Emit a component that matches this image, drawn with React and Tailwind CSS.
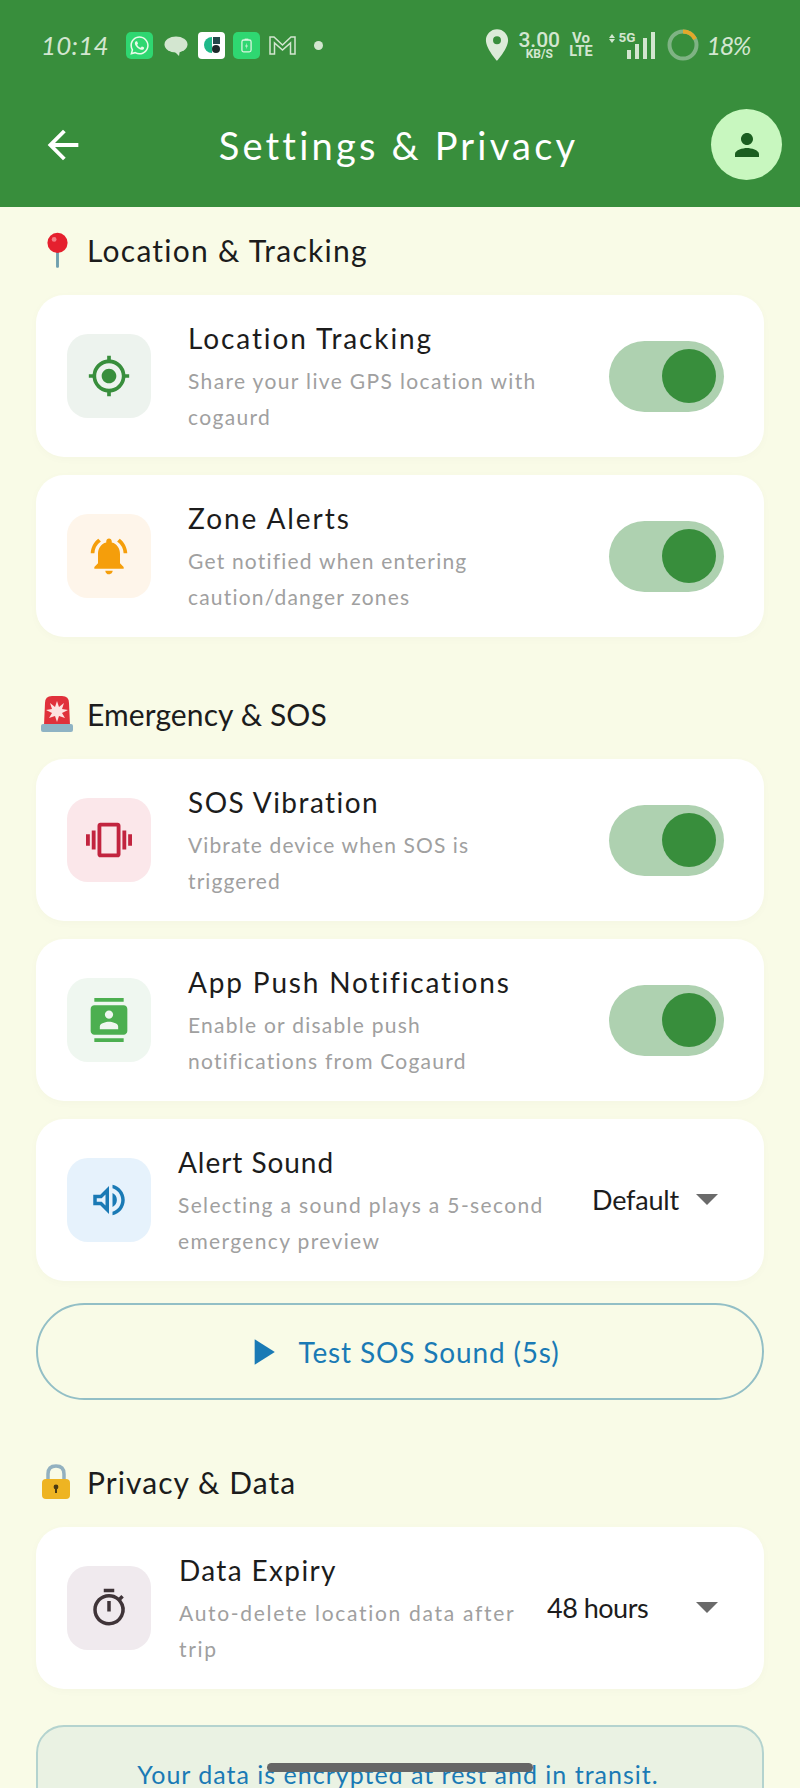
import React from "react";
import { FaWhatsapp } from "react-icons/fa";
import {
  MdArrowBack,
  MdPerson,
  MdGpsFixed,
  MdNotificationsActive,
  MdVibration,
  MdContacts,
  MdOutlineVolumeUp,
  MdOutlineTimer,
  MdPlayArrow,
  MdLocationOn,
} from "react-icons/md";

const FONT = "[font-family:Lato,'Noto_Sans',sans-serif]";

// Small pushpin shown next to the location heading
function PinEmoji() {
  return (
    <svg viewBox="0 0 26 38" className="w-[25px] h-[37px] ml-[4px]">
      <rect x="11.5" y="18" width="3" height="19" rx="1" fill="#6f9fae" />
      <circle cx="13" cy="11" r="10.5" fill="#e5202e" />
      <circle cx="9.5" cy="7.5" r="2.5" fill="#f57e86" />
    </svg>
  );
}

// Rotating beacon shown next to the emergency heading
function SirenEmoji() {
  return (
    <svg viewBox="0 0 34 38" className="w-[34px] h-[38px] -ml-[1px]">
      <path d="M4 30 L5 8 Q5 1 12 1 H22 Q29 1 29 8 L30 30 Z" fill="#e0313b" />
      <path
        d="M17 6 L19 12 L24 8 L22 14 L28 15 L22 18 L25 23 L19 21 L17 27 L15 21 L9 23 L12 18 L6 15 L12 14 L10 8 L15 12 Z"
        fill="#fde3e0"
      />
      <rect x="1" y="29" width="32" height="8" rx="2" fill="#8fb3c4" />
    </svg>
  );
}

// Padlock shown next to the privacy heading
function LockEmoji() {
  return (
    <svg viewBox="0 0 30 36" className="w-[30px] h-[36px]">
      <path d="M7 17 V10 Q7 2 15 2 Q23 2 23 10 V17" fill="none" stroke="#93b1c0" strokeWidth="3.5" />
      <rect x="1" y="15" width="28" height="20" rx="4" fill="#eeb422" />
      <circle cx="15" cy="23" r="2.4" fill="#4b3a12" />
      <rect x="14" y="23" width="2" height="6" fill="#4b3a12" />
    </svg>
  );
}

function StatusBar() {
  return (
    <div className="flex items-center h-[36px] pl-[41px] pr-[50px] text-[#d3e6d0]">
      <span className={`${FONT} italic text-[26px] leading-none tracking-[0.2px] w-[85px]`}>10:14</span>
      <div className="w-[27px] h-[27px] rounded-[5px] bg-[#2fd771] flex items-center justify-center">
        <FaWhatsapp className="text-[21px] text-[#e8fbe8]" />
      </div>
      <svg viewBox="0 0 24 21" className="w-[24px] h-[21px] ml-[11px] mt-[2px]">
        <ellipse cx="12" cy="8.5" rx="11.5" ry="8" fill="#d3e6d0" />
        <path d="M9 14 L15 20 L16 14 Z" fill="#d3e6d0" />
      </svg>
      <div className="w-[27px] h-[27px] rounded-[4px] bg-white ml-[10px] flex items-center justify-center">
        <svg viewBox="0 0 20 20" className="w-[20px] h-[20px]">
          <path d="M10 2 A8 8 0 0 0 10 18 Z" fill="#1fb98a" />
          <rect x="11" y="2" width="7" height="7" fill="#24484a" />
          <circle cx="14" cy="14" r="4" fill="#1d2a2a" />
        </svg>
      </div>
      <div className="w-[27px] h-[27px] rounded-[5px] bg-[#2fd771] ml-[8px] flex items-center justify-center">
        <svg viewBox="0 0 12 16" className="w-[11px] h-[15px]">
          <rect x="1" y="2" width="10" height="13" rx="2" fill="none" stroke="#d9f5df" strokeWidth="1.4" />
          <rect x="4" y="0.5" width="4" height="1.5" fill="#d9f5df" />
          <path d="M6.5 5 L4.5 9 H6 L5.5 12 L7.5 8 H6 Z" fill="#d9f5df" />
        </svg>
      </div>
      <svg viewBox="0 0 27 20" className="w-[27px] h-[20px] ml-[9px]">
        <path
          d="M1 19 V2 H5 L13.5 10 L22 2 H26 V19 H21.5 V8 L13.5 15 L5.5 8 V19 Z"
          fill="none"
          stroke="#d3e6d0"
          strokeWidth="1.5"
        />
      </svg>
      <div className="w-[9px] h-[9px] rounded-full bg-[#d3e6d0] ml-[18px]" />
      <div className="flex-1" />
      <MdLocationOn className="text-[38px] text-[#dcebd9]" />
      <div className="flex flex-col items-center w-[46px] [font-family:Roboto,sans-serif] font-medium">
        <span className="text-[21px] leading-[18px]">3.00</span>
        <span className="text-[12px] leading-[10px] font-bold">KB/S</span>
      </div>
      <div className="flex flex-col items-center ml-[7px] [font-family:Roboto,sans-serif] font-bold">
        <span className="text-[15px] leading-[13px]">Vo</span>
        <span className="text-[14.5px] leading-[14px]">LTE</span>
      </div>
      <div className="relative w-[46px] h-[28px] ml-[16px]">
        <div className="absolute left-0 top-[3px] w-0 h-0 border-x-[3.5px] border-x-transparent border-b-[4px] border-b-[#d3e6d0]" />
        <div className="absolute left-0 top-[8px] w-0 h-0 border-x-[3.5px] border-x-transparent border-t-[4px] border-t-[#d3e6d0]" />
        <span className="absolute left-[10px] top-0 text-[13.5px] leading-[13px] font-bold [font-family:Roboto,sans-serif]">
          5G
        </span>
        <div className="absolute right-0 bottom-0 flex items-end gap-[4px]">
          <div className="w-[4px] h-[9px] bg-[#d3e6d0]" />
          <div className="w-[4px] h-[15px] bg-[#d3e6d0]" />
          <div className="w-[4px] h-[21px] bg-[#d3e6d0]" />
          <div className="w-[4px] h-[27px] bg-[#d3e6d0]" />
        </div>
      </div>
      <svg viewBox="0 0 32 32" className="w-[32px] h-[32px] ml-[12px]">
        <circle cx="16" cy="16" r="13.5" fill="none" stroke="#7fb384" strokeWidth="4" />
        <path d="M16 2.5 A13.5 13.5 0 0 1 28 10" fill="none" stroke="#e3a82b" strokeWidth="4" />
      </svg>
      <span className={`${FONT} italic text-[25px] leading-none ml-[8px] tracking-[-1.4px]`}>18%</span>
    </div>
  );
}

function Header() {
  return (
    <header className="h-[207px] bg-[#388e3c] pt-[27px] shrink-0">
      <StatusBar />
      <div className="flex items-center justify-between mt-[46px] pl-[40px] pr-[18px]">
        <MdArrowBack className="text-[46px] text-white" />
        <h1 className={`${FONT} text-white text-[38px] leading-none tracking-[3.2px] font-normal`}>
          Settings &amp; Privacy
        </h1>
        <div className="w-[71px] h-[71px] rounded-full bg-[#c8f7bf] flex items-center justify-center">
          <MdPerson className="text-[36px] text-[#1b5e20]" />
        </div>
      </div>
    </header>
  );
}

function SectionHeading({ emoji, label, tracking, className }) {
  return (
    <div className={`flex items-center h-[36px] pl-[5px] ${className}`}>
      <div className="w-[46px] flex items-center justify-start">{emoji}</div>
      <h2 className={`${FONT} text-[30px] leading-none text-[#1c1c1c] font-normal ${tracking}`}>{label}</h2>
    </div>
  );
}

function Toggle() {
  return (
    <div className="w-[115px] h-[71px] rounded-full bg-[#aed1b0] flex items-center justify-end pr-[8px] shrink-0">
      <div className="w-[54px] h-[54px] rounded-full bg-[#388e3c]" />
    </div>
  );
}

function Dropdown({ value, valueClass }) {
  return (
    <div className="flex items-center shrink-0 -translate-y-[1px]">
      <span className={`${FONT} text-[27px] leading-none text-[#1c1c1c] ${valueClass}`}>{value}</span>
      <div className="w-0 h-0 border-x-[11px] border-x-transparent border-t-[11px] border-t-[#6a6a6a]" />
    </div>
  );
}

function SettingCard({ icon, iconBg, title, titleTracking, lines, subTracking, right, textGap, className = "" }) {
  return (
    <div
      className={`flex items-center h-[162px] rounded-[28px] bg-white shadow-[0_2px_10px_rgba(0,0,0,0.025)] pl-[31px] pr-[40px] ${className}`}
    >
      <div className={`w-[84px] h-[84px] rounded-[21px] flex items-center justify-center shrink-0 ${iconBg}`}>
        {icon}
      </div>
      <div className={`flex-1 min-w-0 pt-[2px] ${textGap}`}>
        <div className={`${FONT} text-[28px] leading-[38px] mb-[6px] text-[#1c1c1c] ${titleTracking}`}>{title}</div>
        <div className={`${FONT} text-[21px] leading-[36px] text-[#a0a0a0] whitespace-nowrap ${subTracking}`}>
          {lines.map((line) => (
            <div key={line}>{line}</div>
          ))}
        </div>
      </div>
      {right}
    </div>
  );
}

export default function App() {
  return (
    <div className="relative h-[1788px] overflow-hidden bg-[#f9fbe7] flex flex-col">
      <Header />
      <main className="px-[36px] pt-[25px]">
        <SectionHeading
          emoji={<PinEmoji />}
          label="Location & Tracking"
          tracking="tracking-[1.25px]"
          className="mb-[27px]"
        />
        <SettingCard
          icon={<MdGpsFixed className="text-[44px] text-[#388e3c]" />}
          iconBg="bg-[#edf3ee]"
          title="Location Tracking"
          titleTracking="tracking-[1.9px]"
          lines={["Share your live GPS location with", "cogaurd"]}
          subTracking="tracking-[1.35px]"
          textGap="ml-[37px]"
          right={<Toggle />}
          className="mb-[18px]"
        />
        <SettingCard
          icon={<MdNotificationsActive className="text-[44px] text-[#f59e0b]" />}
          iconBg="bg-[#fef5ea]"
          title="Zone Alerts"
          titleTracking="tracking-[1.95px]"
          lines={["Get notified when entering", "caution/danger zones"]}
          subTracking="tracking-[1.2px]"
          textGap="ml-[37px]"
          right={<Toggle />}
        />

        <SectionHeading
          emoji={<SirenEmoji />}
          label="Emergency & SOS"
          tracking="tracking-[0.1px]"
          className="mt-[59px] mb-[27px]"
        />
        <SettingCard
          icon={<MdVibration className="text-[46px] text-[#c2243f]" />}
          iconBg="bg-[#fbe7ea]"
          title="SOS Vibration"
          titleTracking="tracking-[1.45px]"
          lines={["Vibrate device when SOS is", "triggered"]}
          subTracking="tracking-[1.1px]"
          textGap="ml-[37px]"
          right={<Toggle />}
          className="mb-[18px]"
        />
        <SettingCard
          icon={<MdContacts className="text-[44px] text-[#4caf50]" />}
          iconBg="bg-[#eff7f0]"
          title="App Push Notifications"
          titleTracking="tracking-[1.85px]"
          lines={["Enable or disable push", "notifications from Cogaurd"]}
          subTracking="tracking-[1.25px]"
          textGap="ml-[37px]"
          right={<Toggle />}
          className="mb-[18px]"
        />
        <SettingCard
          icon={<MdOutlineVolumeUp className="text-[42px] text-[#1a7ab5]" />}
          iconBg="bg-[#e6f2fc]"
          title="Alert Sound"
          titleTracking="tracking-[0.95px]"
          lines={["Selecting a sound plays a 5-second", "emergency preview"]}
          subTracking="tracking-[1.35px]"
          textGap="ml-[27px]"
          right={<Dropdown value="Default" valueClass="w-[104px] tracking-[-0.2px]" />}
          className="!pr-[46px]"
        />
        <button className="mt-[22px] w-full h-[97px] rounded-full border-2 border-[#93bfc6] flex items-center justify-center">
          <MdPlayArrow className="text-[44px] text-[#1a7ab5] mr-[14px]" />
          <span className={`${FONT} text-[28px] leading-none text-[#1a7ab5] tracking-[0.85px]`}>
            Test SOS Sound (5s)
          </span>
        </button>

        <SectionHeading
          emoji={<LockEmoji />}
          label="Privacy & Data"
          tracking="tracking-[1.05px]"
          className="mt-[64px] mb-[27px]"
        />
        <SettingCard
          icon={<MdOutlineTimer className="text-[42px] text-[#3f3438]" />}
          iconBg="bg-[#f0eaee]"
          title="Data Expiry"
          titleTracking="tracking-[1.35px]"
          lines={["Auto-delete location data after", "trip"]}
          subTracking="tracking-[1.7px]"
          textGap="ml-[28px]"
          right={<Dropdown value="48 hours" valueClass="w-[149px] tracking-[-0.5px]" />}
          className="!pr-[46px]"
        />
        <div className="mt-[36px] h-[140px] rounded-t-[28px] border-2 border-[#b4d3cf] bg-[#eaf2e3] pt-[29px] pr-[4px] text-center">
          <span className={`${FONT} text-[25px] leading-[36px] text-[#1a7ab5] tracking-[1px]`}>
            Your data is encrypted at rest and in transit.
          </span>
        </div>
      </main>
      {/* Gesture handle drawn over the scrolling content */}
      <div className="absolute left-[267px] top-[1763px] w-[266px] h-[9px] rounded-full bg-[#666666]" />
    </div>
  );
}
